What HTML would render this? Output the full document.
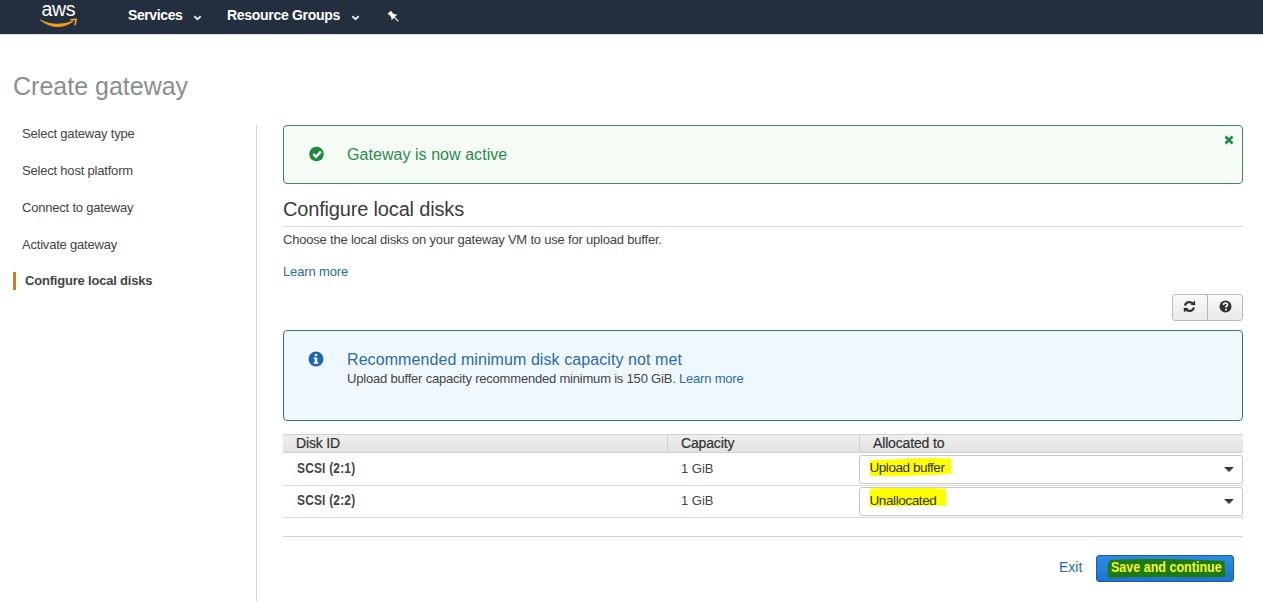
<!DOCTYPE html>
<html>
<head>
<meta charset="utf-8">
<style>
*{box-sizing:border-box;margin:0;padding:0}
html,body{width:1263px;height:601px;overflow:hidden;background:#fff;font-family:"Liberation Sans",sans-serif;color:#444}
.abs{position:absolute;white-space:nowrap}
#nav{position:absolute;left:0;top:0;width:1263px;height:34px;background:#232f3e;box-shadow:0 1px 1px rgba(0,0,0,0.12)}
.navt{position:absolute;color:#fff;font-weight:bold;font-size:14px;top:7px;letter-spacing:-0.4px}
.chev{position:absolute;top:15px}
#title{left:13px;top:72px;font-size:25px;color:#8b8f92}
.ln{left:22px;font-size:13px;color:#444;letter-spacing:-0.2px}
#vsep{position:absolute;left:256px;top:125px;width:1px;height:476px;background:#d5d5d5}
#bar{position:absolute;left:13px;top:272px;width:3px;height:18px;background:#d4791f}
.alert{position:absolute;border-radius:4px}
#succ{left:283px;top:125px;width:960px;height:59px;border:1px solid #3a875a;background:#f5fcf6}
#info{left:283px;top:330px;width:960px;height:91px;border:1px solid #3a6ea0;background:#eff8fe}
#h2{left:283px;top:197.5px;font-size:20px;color:#3b3b3b;letter-spacing:-0.17px}
#hline{position:absolute;left:283px;top:226px;width:960px;height:1px;background:#d8d8d8}
#desc{left:283px;top:232px;font-size:13px;color:#444;letter-spacing:-0.2px}
.link{color:#2c6aa8}
#btns{position:absolute;left:1172px;top:294px;width:71px;height:27px;border:1px solid #bbb;border-radius:3px;background:linear-gradient(#fafafa,#e9e9e9)}
#btns .d{position:absolute;left:34px;top:0;width:1px;height:25px;background:#b5b5b5}
#thead{position:absolute;left:283px;top:434px;width:960px;height:19px;background:linear-gradient(#eeeeee,#e3e3e3);border-top:1px solid #d0d0d0;border-bottom:1px solid #cfcfcf}
.th{position:absolute;top:0px;font-size:14px;color:#333;letter-spacing:-0.15px;-webkit-text-stroke:0.2px #333}
.tsep{position:absolute;top:0;width:1px;height:18px;background:#d0d0d0}
.row{position:absolute;left:283px;width:960px;height:1px;background:#d8d8d8}
.td{font-size:13px;color:#444}
.sel{position:absolute;left:859px;width:384px;height:29px;border:1px solid #c9c9c9;border-radius:3px;background:#fff}
.hl{position:absolute;background:#ffff00}
.caret{position:absolute;left:364px;top:11.3px;width:0;height:0;border-left:5px solid transparent;border-right:5px solid transparent;border-top:5px solid #3a3a3a}
#fline{position:absolute;left:283px;top:536px;width:960px;height:1px;background:#cfcfcf}
#save{position:absolute;left:1096px;top:555px;width:138px;height:27px;border:1px solid #1a5ca8;border-radius:3px;background:linear-gradient(#2c8be0,#1f74d0)}
</style>
</head>
<body>
<div id="nav">
  <svg class="abs" style="left:38px;top:2px" width="42" height="28" viewBox="0 0 42 28">
    <text x="3.5" y="14.3" fill="#fff" font-family="Liberation Sans" font-size="19.5" letter-spacing="-0.3">aws</text>
    <path d="M1.8 17.2 Q18.5 25.6 35.2 18.4 L35.6 19.6 Q18.5 31.4 1.8 17.9 Z" fill="#f0981f"/>
    <path d="M32.8 17.8 L38.3 17.3 L37 22.6" stroke="#f5a63a" stroke-width="1.6" fill="none" stroke-linejoin="round" stroke-linecap="round"/>
  </svg>
  <div class="navt" style="left:128px">Services</div>
  <svg class="chev" style="left:193px" width="9" height="6" viewBox="0 0 9 6"><path d="M1.3 1.2 L4.5 4.2 L7.7 1.2" stroke="#e4e6ea" stroke-width="2" fill="none"/></svg>
  <div class="navt" style="left:227px;letter-spacing:-0.3px">Resource Groups</div>
  <svg class="chev" style="left:350.5px" width="9" height="6" viewBox="0 0 9 6"><path d="M1.3 1.2 L4.5 4.2 L7.7 1.2" stroke="#e4e6ea" stroke-width="2" fill="none"/></svg>
  <svg class="abs" style="left:386.5px;top:9.5px" width="13" height="14" viewBox="0 0 13 14"><g transform="rotate(-45 6.5 6.5)"><rect x="4.3" y="0.5" width="4.4" height="1.3" fill="#fff"/><path d="M4.8 1.5 H8.2 L8.6 5.5 L10.6 7.8 H2.4 L4.4 5.5 Z" fill="#fff"/><rect x="6" y="7.5" width="1.1" height="6" fill="#fff"/></g></svg>
</div>

<div id="title" class="abs">Create gateway</div>

<div class="abs ln" style="top:126px">Select gateway type</div>
<div class="abs ln" style="top:163px">Select host platform</div>
<div class="abs ln" style="top:200px">Connect to gateway</div>
<div class="abs ln" style="top:237px">Activate gateway</div>
<div id="bar"></div>
<div class="abs ln" style="left:25px;top:273px;font-weight:bold;color:#444">Configure local disks</div>
<div id="vsep"></div>

<div id="succ" class="alert">
  <svg class="abs" style="left:25px;top:20px" width="16" height="16" viewBox="0 0 16 16"><circle cx="7.5" cy="8" r="7.3" fill="#1d8a3f"/><path d="M4.3 8.2 L7 10.8 L11.8 5.6" stroke="#fff" stroke-width="2.3" fill="none"/></svg>
  <div class="abs" style="left:63px;top:20px;font-size:16px;color:#2d8a4d;letter-spacing:0.05px">Gateway is now active</div>
  <svg class="abs" style="left:940px;top:8.5px" width="10" height="10" viewBox="0 0 10 10"><path d="M1.5 1.5 L8.5 8.5 M8.5 1.5 L1.5 8.5" stroke="#1d8a3f" stroke-width="2.6"/></svg>
</div>

<div id="h2" class="abs">Configure local disks</div>
<div id="hline"></div>
<div id="desc" class="abs">Choose the local disks on your gateway VM to use for upload buffer.</div>
<div class="abs link" style="left:283px;top:264px;font-size:13px;letter-spacing:-0.15px">Learn more</div>

<div id="btns">
  <svg class="abs" style="left:10.3px;top:4.8px" width="13" height="13" viewBox="0 0 13 13"><path d="M2 5.5 A4.6 4.6 0 0 1 10.3 4.2" stroke="#333" stroke-width="2.3" fill="none"/><path d="M7.5 5 L12.3 5.2 L12 0.5 Z" fill="#333"/><path d="M11 7.5 A4.6 4.6 0 0 1 2.7 8.8" stroke="#333" stroke-width="2.3" fill="none"/><path d="M5.5 8 L0.7 7.8 L1 12.5 Z" fill="#333"/></svg>
  <div class="d"></div>
  <svg class="abs" style="left:45.6px;top:5.1px" width="13" height="13" viewBox="0 0 13 13"><circle cx="6.5" cy="6.5" r="6" fill="#333"/><path d="M4.5 5 Q4.5 3 6.5 3 Q8.5 3 8.5 4.8 Q8.5 6 7 6.6 L7 7.6" stroke="#fff" stroke-width="1.7" fill="none"/><rect x="6" y="8.8" width="1.8" height="1.6" fill="#fff"/></svg>
</div>

<div id="info" class="alert">
  <svg class="abs" style="left:24px;top:20.2px" width="16" height="16" viewBox="0 0 16 16"><circle cx="8" cy="8" r="7.5" fill="#1f67b0"/><rect x="6.8" y="3" width="2.4" height="2.2" fill="#fff"/><path d="M5.8 6.5 H9.2 V11.3 H10.3 V12.8 H5.8 V11.3 H6.8 V8 H5.8 Z" fill="#fff"/></svg>
  <div class="abs" style="left:63px;top:20px;font-size:16px;color:#2c6aa8;letter-spacing:0.08px">Recommended minimum disk capacity not met</div>
  <div class="abs" style="left:63px;top:40px;font-size:13px;color:#444;letter-spacing:-0.2px">Upload buffer capacity recommended minimum is 150 GiB. <span class="link">Learn more</span></div>
</div>

<div id="thead">
  <div class="th" style="left:13px">Disk ID</div>
  <div class="tsep" style="left:384px"></div>
  <div class="th" style="left:398px">Capacity</div>
  <div class="tsep" style="left:576px"></div>
  <div class="th" style="left:590px">Allocated to</div>
</div>
<div class="abs td" style="left:297px;top:460.1px;font-size:14px;font-weight:bold;letter-spacing:0.25px;transform:scaleX(0.85);transform-origin:0 0">SCSI (2:1)</div>
<div class="abs td" style="left:681px;top:461px">1 GiB</div>
<div class="sel" style="top:455px"><svg class="abs" style="left:0;top:0" width="100" height="28"><path d="M9.5 4.5 Q40 3 60 2.3 Q80 2 91 2.5 L91.5 18 Q60 19.5 40 20.3 L9.5 20.2 Z" fill="#ffff00"/></svg><div class="abs td" style="left:9.5px;top:4px;color:#333;font-size:13.5px;letter-spacing:-0.45px">Upload buffer</div><div class="caret"></div></div>
<div class="row" style="top:485px"></div>
<div class="abs td" style="left:297px;top:492.1px;font-size:14px;font-weight:bold;letter-spacing:0.25px;transform:scaleX(0.85);transform-origin:0 0">SCSI (2:2)</div>
<div class="abs td" style="left:681px;top:493px">1 GiB</div>
<div class="sel" style="top:487px"><svg class="abs" style="left:0;top:0" width="100" height="28"><path d="M9.5 0.8 Q30 -0.2 50 -0.5 Q75 -0.2 86 1 L86.5 17.5 Q50 18 30 18.3 L9.5 18.5 Z" fill="#ffff00"/></svg><div class="abs td" style="left:9.5px;top:4.5px;color:#333;font-size:13.5px;letter-spacing:-0.4px">Unallocated</div><div class="caret"></div></div>
<div class="row" style="top:517px"></div>

<div id="fline"></div>
<div class="abs link" style="left:1059px;top:559px;font-size:14px">Exit</div>
<div id="save"><svg class="abs" style="left:0;top:0" width="138" height="27"><path d="M13 4 Q40 2.5 70 3 Q100 3.5 127.5 5 L128.5 21 Q100 21.5 70 21 Q40 21 20 21.5 Q12 23 10.5 20 L11 8 Z" fill="#1e7a14"/></svg><div class="abs" style="left:13.5px;top:3.2px;font-size:14px;font-weight:bold;color:#f6f62a;transform:scaleX(0.895);transform-origin:0 0">Save and continue</div></div>
</body>
</html>
